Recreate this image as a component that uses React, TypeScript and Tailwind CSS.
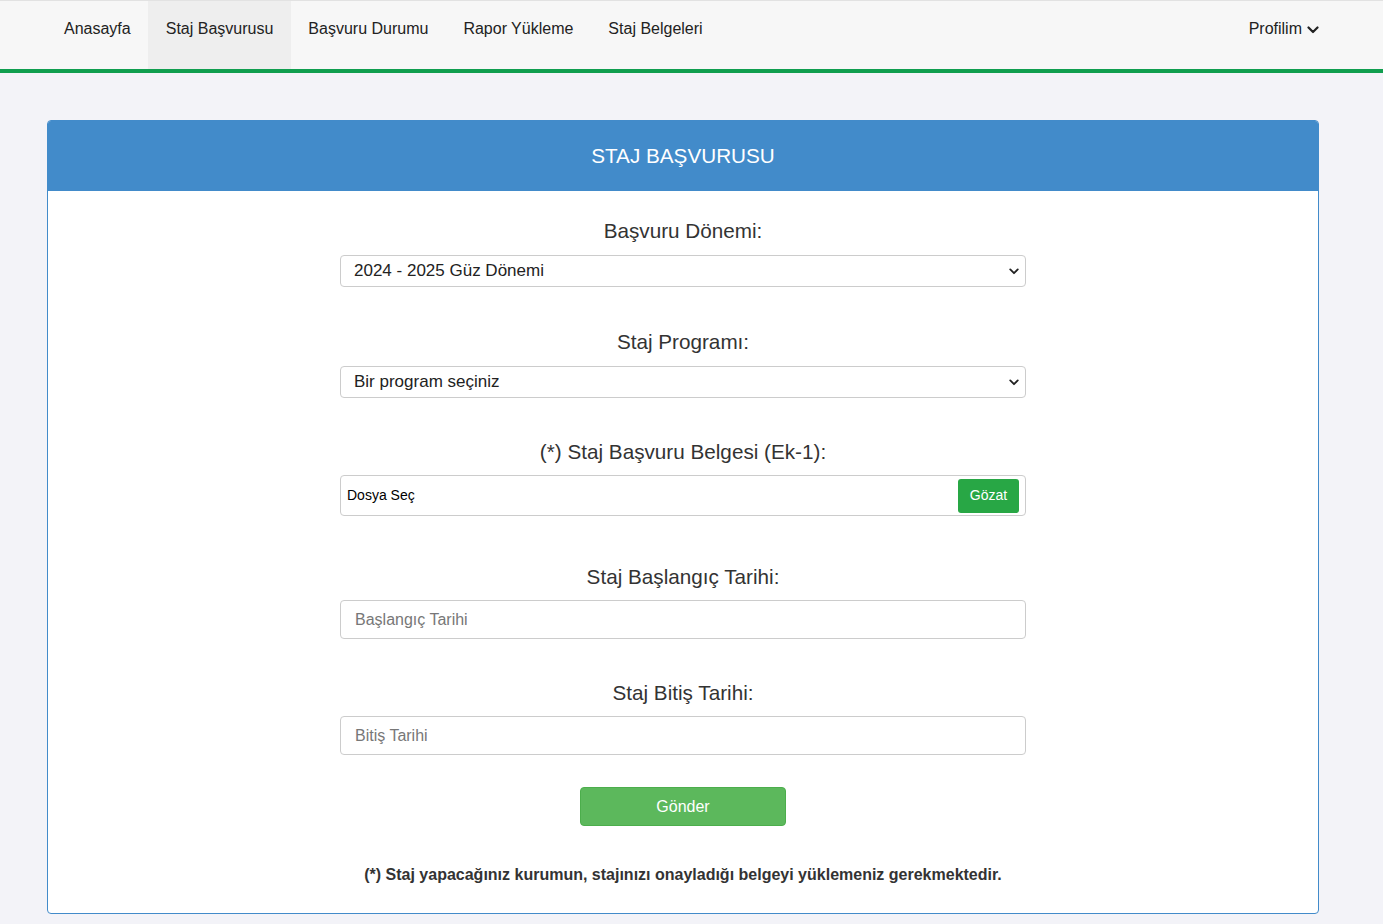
import React from "react";

function Chevron({ className }: { className?: string }) {
  return (
    <svg className={className} viewBox="0 0 12 8" fill="none" stroke="currentColor" strokeWidth="2.2" strokeLinecap="round" strokeLinejoin="round">
      <polyline points="1.5,1.5 6,6 10.5,1.5" />
    </svg>
  );
}

function Label({ children, className = "" }: { children: React.ReactNode; className?: string }) {
  return <div className={`text-center text-[20.7px] leading-[24px] text-[#333] ${className}`}>{children}</div>;
}

function SelectBox({ value }: { value: string }) {
  return (
    <div className="mt-[12px] flex h-[32px] items-center justify-between rounded-[4px] border border-[#ccc] bg-white pl-[13px] pr-[6px] text-[17px] text-[#222]">
      <span>{value}</span>
      <Chevron className="h-[7px] w-[10px] text-[#222]" />
    </div>
  );
}

function TextInput({ placeholder }: { placeholder: string }) {
  return (
    <div className="mt-[11px] flex h-[39px] items-center rounded-[4px] border border-[#ccc] bg-white pl-[14px] text-[16px] text-[#777]">
      {placeholder}
    </div>
  );
}

export default function App() {
  const navItems = ["Anasayfa", "Staj Başvurusu", "Başvuru Durumu", "Rapor Yükleme", "Staj Belgeleri"];
  return (
    <div className="min-h-screen bg-[#f3f3f8] pb-[8px] font-['Liberation_Sans',Arial,sans-serif]">
      <div className="border-t border-[#e2e2e2] bg-[#f7f7f7]">
        <div className="ml-[46.5px] flex h-[68px] w-[1273.5px] items-stretch justify-between">
          <div className="flex items-stretch">
            {navItems.map((item, i) => (
              <div
                key={item}
                className={`px-[17.5px] pt-[18px] text-[16px] leading-[20px] text-[#222] ${i === 1 ? "bg-[#eeeeee]" : ""}`}
              >
                {item}
              </div>
            ))}
          </div>
          <div className="flex items-start gap-[4px] pt-[18px] text-[16px] leading-[20px] text-[#222]">
            <span>Profilim</span>
            <Chevron className="mt-[7px] h-[8px] w-[14px]" />
          </div>
        </div>
      </div>
      <div className="h-[4px] bg-[#109e4f]" />

      <div className="ml-[47px] mt-[47px] w-[1272px] overflow-hidden rounded-[4px] border border-[#428bca] bg-white">
        <div className="flex h-[70px] items-center justify-center bg-[#428bca] text-[20.7px] text-white">
          STAJ BAŞVURUSU
        </div>
        <div className="mx-auto w-[686px] pb-[28px] pt-[28px]">
          <Label>Başvuru Dönemi:</Label>
          <SelectBox value="2024 - 2025 Güz Dönemi" />

          <Label className="mt-[43px]">Staj Programı:</Label>
          <SelectBox value="Bir program seçiniz" />

          <Label className="mt-[42px]">(*) Staj Başvuru Belgesi (Ek-1):</Label>
          <div className="mt-[11px] flex h-[41px] items-center justify-between rounded-[4px] border border-[#ccc] bg-white pl-[6px] pr-[6px]">
            <span className="text-[14px] text-black">Dosya Seç</span>
            <div className="flex h-[34px] w-[61px] items-center justify-center rounded-[3px] bg-[#28a745] text-[14px] text-white">
              Gözat
            </div>
          </div>

          <Label className="mt-[49px]">Staj Başlangıç Tarihi:</Label>
          <TextInput placeholder="Başlangıç Tarihi" />

          <Label className="mt-[42px]">Staj Bitiş Tarihi:</Label>
          <TextInput placeholder="Bitiş Tarihi" />

          <div className="mt-[32px] flex justify-center">
            <div className="flex h-[39px] w-[206px] items-center justify-center rounded-[4px] border border-[#4cae4c] bg-[#5cb85c] text-[16px] text-white">
              Gönder
            </div>
          </div>

          <div className="mt-[39px] text-center text-[16px] font-bold leading-[20px] text-[#333]">
            (*) Staj yapacağınız kurumun, stajınızı onayladığı belgeyi yüklemeniz gerekmektedir.
          </div>
        </div>
      </div>
    </div>
  );
}
